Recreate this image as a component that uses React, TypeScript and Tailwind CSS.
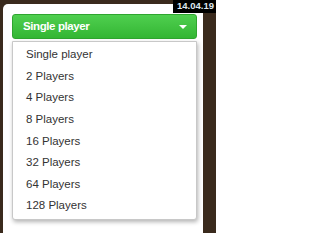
const options = [
  "Single player",
  "2 Players",
  "4 Players",
  "8 Players",
  "16 Players",
  "32 Players",
  "64 Players",
  "128 Players",
];

const App = () => {
  return (
    <div
      className="relative h-[233px] w-[216px] overflow-hidden bg-[#3a2a1d] pl-[3px] pt-[4px]"
      style={{ fontFamily: '"Liberation Sans", Arial, sans-serif' }}
    >
      <div className="h-full w-[200px] rounded-tl-[5px] bg-white px-[9px] pt-[10px]">
        <div className="flex h-[25px] w-[185px] items-center justify-between rounded-[3px] border border-[#2fa52f] bg-gradient-to-b from-[#4fcf4f] to-[#33b633] pl-[10px] pr-[9px]">
          <span className="text-[11.5px] font-bold tracking-[-0.4px] text-white">Single player</span>
          <svg width="8" height="4" viewBox="0 0 8 4" className="mt-[1px]">
            <path d="M0 0 L8 0 L4 4 Z" fill="#ffffff" />
          </svg>
        </div>
        <ul className="mt-[2px] w-[185px] rounded-b-[3px] border border-[#c8c8c8] bg-white py-[2px] shadow-[1px_2px_4px_rgba(0,0,0,0.3)]">
          {options.map((label) => (
            <li
              key={label}
              className="flex h-[21.6px] items-center pl-[13px] text-[11.5px] text-[#333333]"
            >
              {label}
            </li>
          ))}
        </ul>
      </div>
      <div className="absolute right-0 top-0 h-[13px] w-[43px] whitespace-nowrap bg-black pl-[4px] text-[9.5px] font-bold leading-[11px] text-[#dfe6ee]">
        14.04.19
      </div>
    </div>
  );
};

export default App;
